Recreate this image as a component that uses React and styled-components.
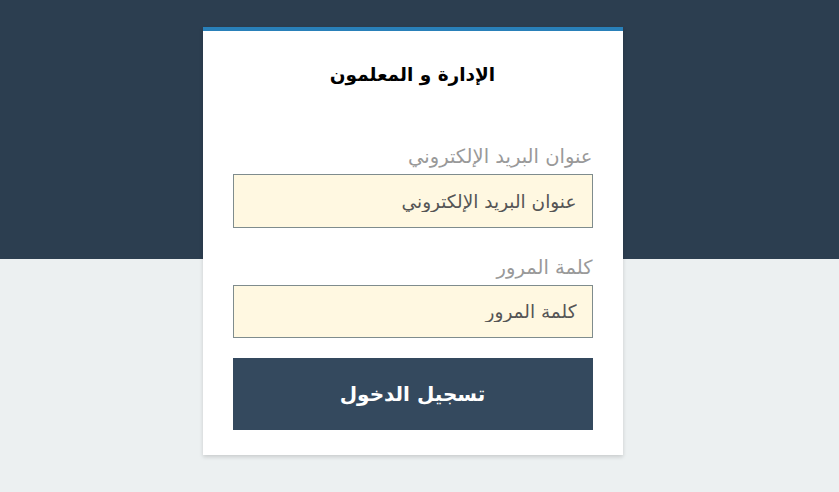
import React from 'react';
import styled, { createGlobalStyle } from 'styled-components';

const GlobalStyle = createGlobalStyle`
  html, body {
    margin: 0;
    padding: 0;
    height: 100%;
  }
  body {
    background: linear-gradient(to bottom, #2c3e50 0, #2c3e50 259px, #ecf0f1 259px, #ecf0f1 100%);
    font-family: "DejaVu Sans", "Noto Sans", sans-serif;
  }
`;

const Page = styled.div`
  display: flex;
  justify-content: center;
  padding: 27px 14px 0 0;
  min-height: 465px;
`;

const Card = styled.form`
  width: 420px;
  box-sizing: border-box;
  background: #fff;
  border-top: 4px solid #2980b9;
  box-shadow: 0 2px 4px rgba(0, 0, 0, 0.15);
  padding: 0 30px 25px;
  direction: rtl;
  display: flex;
  flex-direction: column;
  align-self: flex-start;
`;

const Title = styled.h2`
  margin: 32px 0 0;
  height: 24px;
  text-align: center;
  font-size: 18.5px;
  font-weight: 700;
  color: #000;
  line-height: 24px;
`;

const Field = styled.div`
  display: flex;
  flex-direction: column;
  margin-top: ${p => p.$top}px;
`;

const Label = styled.label`
  font-size: 19.5px;
  color: #999;
  line-height: 26px;
  margin-bottom: 4px;
`;

const Input = styled.input`
  box-sizing: border-box;
  width: 100%;
  height: ${p => p.$h}px;
  background: #fff8e1;
  border: 1px solid #7f8c8d;
  padding: 0 15px;
  font-family: inherit;
  font-size: 18.5px;
  color: #555;
  direction: rtl;
  outline: none;
  &::placeholder {
    color: #555;
  }
`;

const Button = styled.button`
  margin-top: 20px;
  height: 72px;
  width: 100%;
  border: none;
  background: #34495e;
  color: #fff;
  font-family: inherit;
  font-size: 20px;
  font-weight: 700;
  cursor: pointer;
`;

const App = () => {
  return (
    <>
      <GlobalStyle />
      <Page>
        <Card onSubmit={e => e.preventDefault()}>
          <Title>الإدارة و المعلمون</Title>
          <Field $top={57}>
            <Label>عنوان البريد الإلكتروني</Label>
            <Input $h={54} type="email" placeholder="عنوان البريد الإلكتروني" />
          </Field>
          <Field $top={27}>
            <Label>كلمة المرور</Label>
            <Input $h={53} type="password" placeholder="كلمة المرور" />
          </Field>
          <Button type="submit">تسجيل الدخول</Button>
        </Card>
      </Page>
    </>
  );
};

export default App;
